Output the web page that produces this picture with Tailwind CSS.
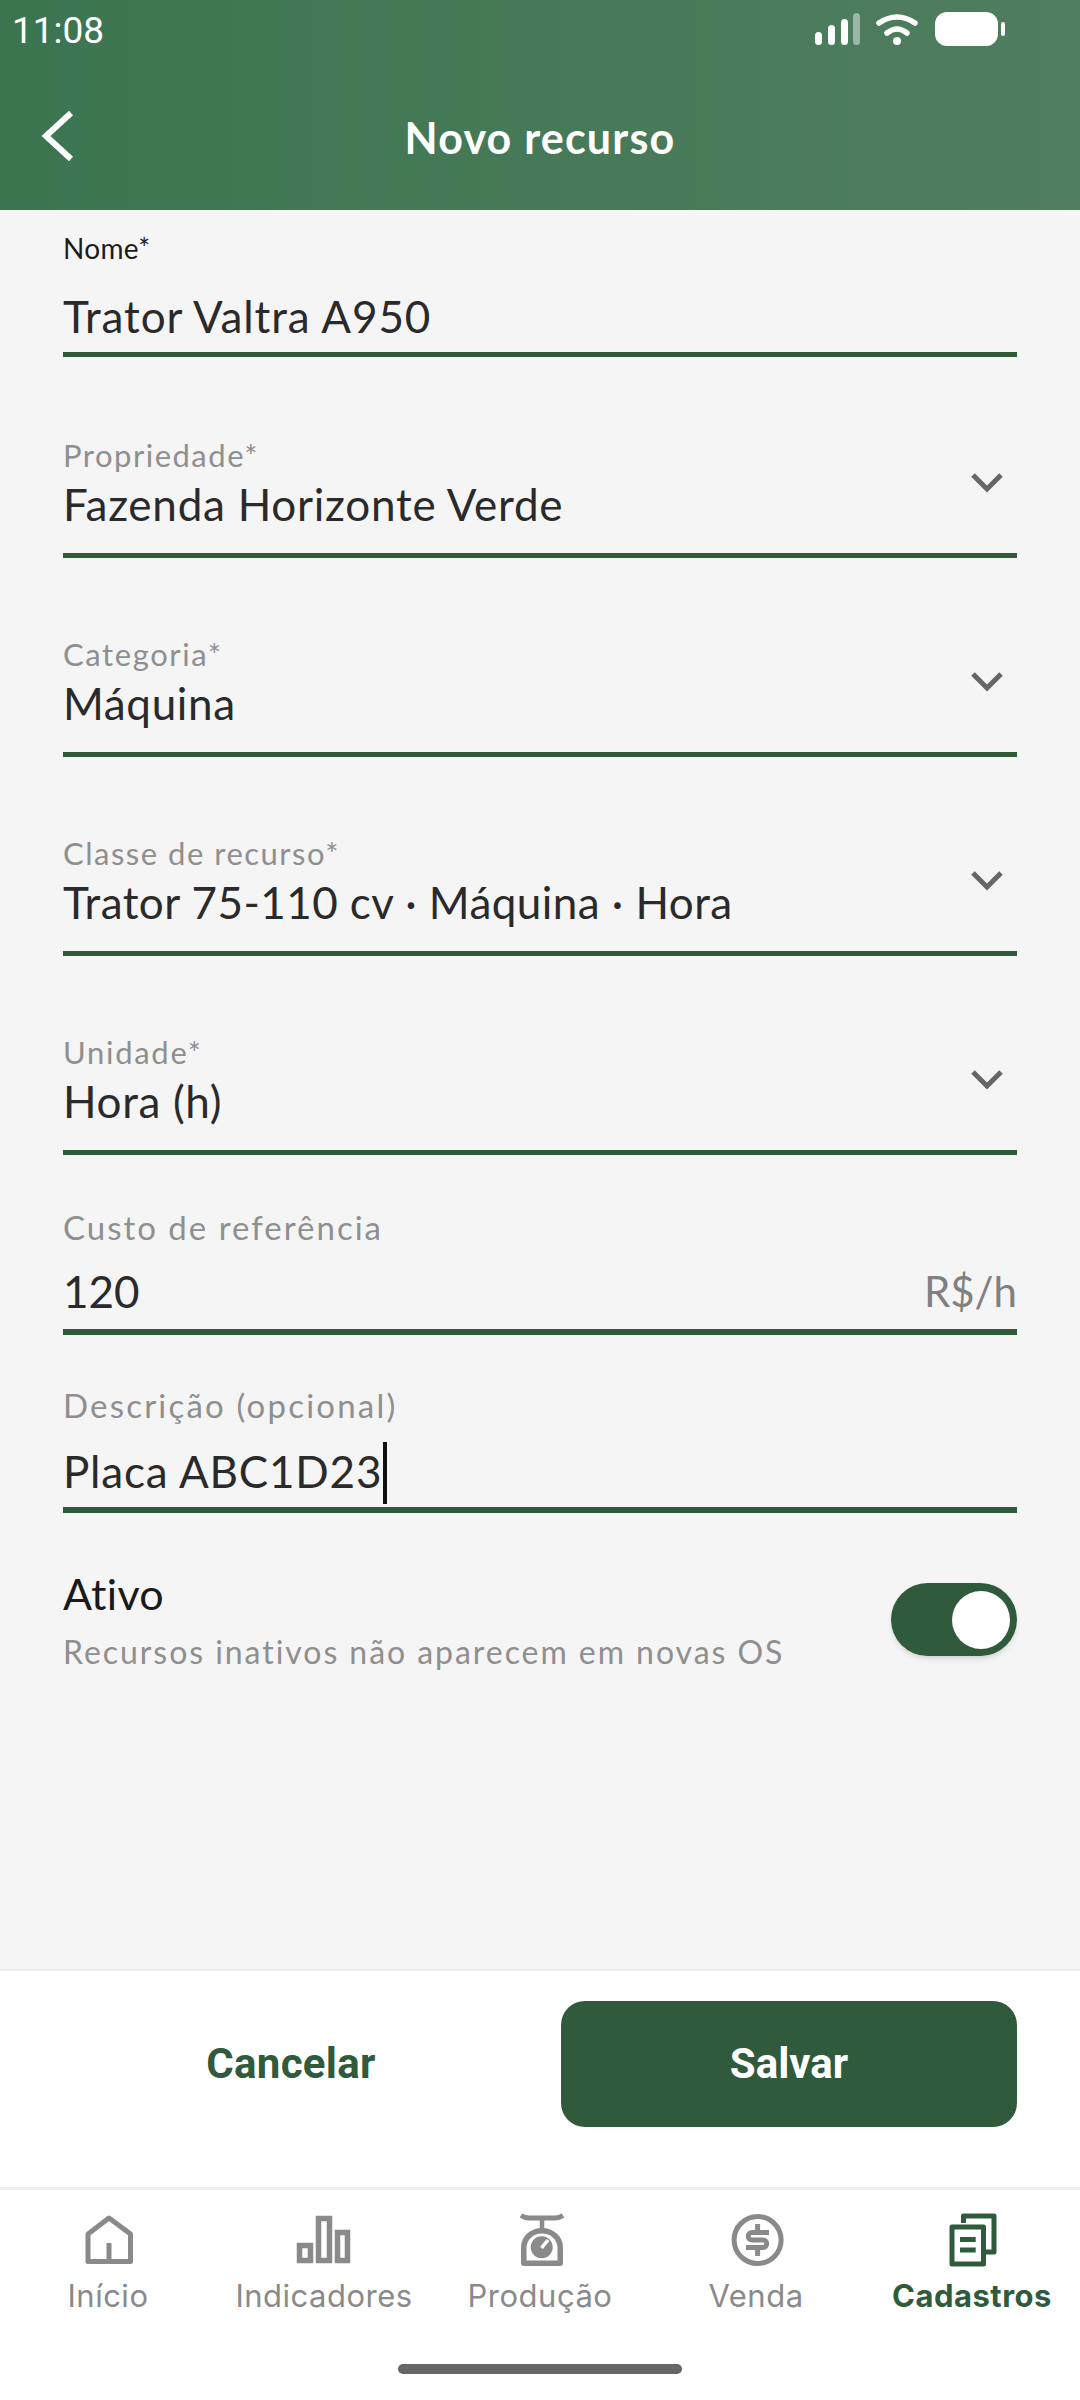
<!DOCTYPE html>
<html lang="en">
<head>
  <meta charset="UTF-8">
  <title>Novo recurso</title>
  <meta name="viewport" content="width=device-width, initial-scale=1.0">
  <script src="https://cdn.jsdelivr.net/npm/@tailwindcss/browser@4"></script>
</head>
<body class="w-[1080px] h-[2400px] flex flex-col overflow-hidden bg-white font-['Lato',sans-serif]">

  <!-- Header -->
  <header class="h-[210px] shrink-0 flex flex-col text-white bg-gradient-to-r from-[#3b7550] to-[#507e5f]">
    <div class="h-[60px] flex items-center justify-between pl-[12px] pr-[75px]">
      <span class="font-['Roboto',sans-serif] text-[37px] leading-none">11:08</span>
      <svg width="190" height="36" viewBox="0 0 190 36" fill="none">
        <rect x="0" y="20" width="7" height="13" rx="3.5" fill="#fff"/>
        <rect x="13" y="13" width="7" height="20" rx="3.5" fill="#fff"/>
        <rect x="26" y="7" width="7" height="26" rx="3.5" fill="#fff"/>
        <rect x="38" y="1" width="7" height="32" rx="3.5" fill="#fff" fill-opacity=".45"/>
        <path d="M64 11Q82 -1 100 11" stroke="#fff" stroke-width="5.500" stroke-linecap="round"/>
        <path d="M72 21Q82 13 92 21" stroke="#fff" stroke-width="5.500" stroke-linecap="round"/>
        <circle cx="82" cy="29" r="4" fill="#fff"/>
        <rect x="120" y="0" width="63" height="34" rx="12" fill="#fff"/>
        <rect x="186" y="10" width="4" height="14" rx="2" fill="#fff"/>
      </svg>
    </div>
    <div class="relative flex-1 flex items-center justify-center pt-[4px]">
      <svg class="absolute left-[41px] top-[49px]" width="36" height="54" viewBox="0 0 36 54" fill="none">
        <path d="M30 4 5 27l25 23" stroke="#fff" stroke-width="6"/>
      </svg>
      <h1 class="text-[43px] font-bold tracking-[1.2px] leading-none">Novo recurso</h1>
    </div>
  </header>

  <!-- Form -->
  <main class="flex-1 bg-[#f5f5f5] px-[63px] flex flex-col">
    <div class="h-[147px] border-b-[5px] border-[#2f5a3c] flex flex-col">
      <label class="mt-[22px] text-[28px] leading-[32px] tracking-[0.3px] text-[#1c1c1c]">Nome*</label>
      <div class="mt-[24px] text-[44px] leading-[56px] tracking-[0.9px] text-[#2a2a2a]">Trator Valtra A950</div>
    </div>

    <div class="h-[201px] border-b-[5px] border-[#2f5a3c] flex items-end justify-between">
      <div class="flex flex-col pb-[21px]">
        <label class="mb-[3px] text-[31px] leading-[36px] tracking-[1.5px] text-[#8f8f8f]">Propriedade*</label>
        <div class="text-[44px] leading-[56px] tracking-[0.75px] text-[#2a2a2a]">Fazenda Horizonte Verde</div>
      </div>
      <svg class="mb-[59px] mr-[13px]" width="34" height="22" viewBox="0 0 34 22" fill="none"><path d="M3 3 17 17 31 3" stroke="#666" stroke-width="5"/></svg>
    </div>

    <div class="h-[199px] border-b-[5px] border-[#2f5a3c] flex items-end justify-between">
      <div class="flex flex-col pb-[21px]">
        <label class="mb-[3px] text-[31px] leading-[36px] tracking-[1.6px] text-[#8f8f8f]">Categoria*</label>
        <div class="text-[44px] leading-[56px] tracking-[0.65px] text-[#2a2a2a]">Máquina</div>
      </div>
      <svg class="mb-[59px] mr-[13px]" width="34" height="22" viewBox="0 0 34 22" fill="none"><path d="M3 3 17 17 31 3" stroke="#666" stroke-width="5"/></svg>
    </div>

    <div class="h-[199px] border-b-[5px] border-[#2f5a3c] flex items-end justify-between">
      <div class="flex flex-col pb-[21px]">
        <label class="mb-[3px] text-[31px] leading-[36px] tracking-[1.5px] text-[#8f8f8f]">Classe de recurso*</label>
        <div class="text-[44px] leading-[56px] tracking-[0.45px] text-[#2a2a2a]">Trator 75-110 cv · Máquina · Hora</div>
      </div>
      <svg class="mb-[59px] mr-[13px]" width="34" height="22" viewBox="0 0 34 22" fill="none"><path d="M3 3 17 17 31 3" stroke="#666" stroke-width="5"/></svg>
    </div>

    <div class="h-[199px] border-b-[5px] border-[#2f5a3c] flex items-end justify-between">
      <div class="flex flex-col pb-[21px]">
        <label class="mb-[3px] text-[31px] leading-[36px] tracking-[1.7px] text-[#8f8f8f]">Unidade*</label>
        <div class="text-[44px] leading-[56px] tracking-[0.65px] text-[#2a2a2a]">Hora (h)</div>
      </div>
      <svg class="mb-[59px] mr-[13px]" width="34" height="22" viewBox="0 0 34 22" fill="none"><path d="M3 3 17 17 31 3" stroke="#666" stroke-width="5"/></svg>
    </div>

    <div class="h-[180px] border-b-[6px] border-[#2f5a3c] flex items-end justify-between">
      <div class="flex flex-col pb-[10px]">
        <label class="text-[33px] leading-[36px] tracking-[2px] text-[#8f8f8f]">Custo de referência</label>
        <div class="mt-[18px] text-[44px] leading-[56px] text-[#2a2a2a]">120</div>
      </div>
      <div class="pb-[10px] text-[42px] leading-[56px] text-[#808080]">R$/h</div>
    </div>

    <div class="h-[178px] border-b-[6px] border-[#2f5a3c] flex flex-col justify-end">
      <label class="text-[33px] leading-[36px] tracking-[2.2px] text-[#8f8f8f]">Descrição (opcional)</label>
      <div class="mt-[19px] pb-[3px] flex items-center text-[44px] leading-[56px] tracking-[0.8px] text-[#2a2a2a]">
        <span class="mb-[4px]">Placa ABC1D23</span>
        <span class="w-[4px] h-[62px] bg-[#111] ml-[1px]"></span>
      </div>
    </div>

    <div class="mt-[56px] flex items-start justify-between">
      <div class="flex flex-col">
        <div class="text-[43px] leading-[50px] tracking-[0.3px] text-[#1a1a1a]">Ativo</div>
        <div class="mt-[15px] text-[32px] leading-[36px] tracking-[1.95px] text-[#8f8f8f]">Recursos inativos não aparecem em novas OS</div>
      </div>
      <div class="mt-[14px] w-[126px] h-[73px] rounded-full bg-[#2f5a3c] flex items-center justify-end pr-[7px] shadow-md">
        <div class="w-[58px] h-[58px] rounded-full bg-white"></div>
      </div>
    </div>
  </main>

  <!-- Actions -->
  <div class="h-[218px] shrink-0 bg-white border-t-[2px] border-[#ececec] flex items-center px-[63px] gap-[42px] pb-[30px]">
    <button class="w-[456px] h-[126px] pb-[2px] font-['Roboto',sans-serif] font-bold text-[42px] tracking-[0.3px] text-[#2f5a3c]">Cancelar</button>
    <button class="flex-1 h-[126px] pb-[2px] rounded-[24px] bg-[#2f5a3c] font-['Roboto',sans-serif] font-bold text-[42px] text-white">Salvar</button>
  </div>

  <!-- Bottom nav -->
  <nav class="h-[213px] shrink-0 bg-white border-t-[3px] border-[#ececec] relative grid grid-cols-5 font-['Inter',sans-serif] text-[31px] leading-[40px] text-[#8a8a8a] tracking-[0.5px]">
    <a class="flex flex-col items-center pt-[22px]">
      <svg width="56" height="56" viewBox="0 0 56 56" fill="none"><path d="M8 22 29 6l21.500 16v27.500H8zM29 49V31" stroke="#8a8a8a" stroke-width="5" stroke-linejoin="round"/></svg>
      <span class="mt-[8px]">Início</span>
    </a>
    <a class="flex flex-col items-center pt-[22px]">
      <svg width="60" height="56" viewBox="0 0 60 56" fill="none"><path d="M5.500 33.500h11v15h-11zM24.500 6.500h11v42h-11zM43.500 20.500h10v28h-10z" stroke="#8a8a8a" stroke-width="5.500"/></svg>
      <span class="mt-[8px]">Indicadores</span>
    </a>
    <a class="flex flex-col items-center pt-[22px]">
      <svg width="56" height="56" viewBox="0 0 56 56" fill="none">
        <path d="M9 3.500c3 2 5 2.500 8 2.500h26c3 0 5-.5 8-2.500" stroke="#8a8a8a" stroke-width="5"/>
        <path d="M30 6v12" stroke="#8a8a8a" stroke-width="4.500"/>
        <path d="M11.750 51.250V36c0-10 8-17.250 18.250-17.250S48.250 26 48.250 36v15.250z" stroke="#8a8a8a" stroke-width="5.500" stroke-linejoin="round"/>
        <circle cx="29.700" cy="35.300" r="11" fill="#8a8a8a"/>
        <path d="m29.500 36 6.500-8" stroke="#fff" stroke-width="3.500"/>
      </svg>
      <span class="mt-[8px]">Produção</span>
    </a>
    <a class="flex flex-col items-center pt-[22px]">
      <svg width="56" height="56" viewBox="0 0 56 56" fill="none"><circle cx="29.600" cy="28" r="23.500" stroke="#8a8a8a" stroke-width="5"/><path d="M41 20.500H24a3.750 3.750 0 0 0 0 7.500h11a3.750 3.750 0 0 1 0 7.500H18M29.600 12v8M29.600 36v8" stroke="#8a8a8a" stroke-width="5"/></svg>
      <span class="mt-[8px]">Venda</span>
    </a>
    <a class="flex flex-col items-center pt-[22px] font-bold text-[#2f5a3c]">
      <svg width="56" height="56" viewBox="0 0 56 56" fill="none"><path d="M19.500 11V4H50v36h-8" stroke="#2f5a3c" stroke-width="5" stroke-linejoin="round"/><path d="M8 15h31.500v37H8zM16 27.500h15.700M16 38h15.700" stroke="#2f5a3c" stroke-width="5" stroke-linejoin="round"/></svg>
      <span class="mt-[8px]">Cadastros</span>
    </a>
    <div class="absolute left-[398px] top-[174px] w-[284px] h-[10px] rounded-full bg-[#666]"></div>
  </nav>

</body>
</html>
